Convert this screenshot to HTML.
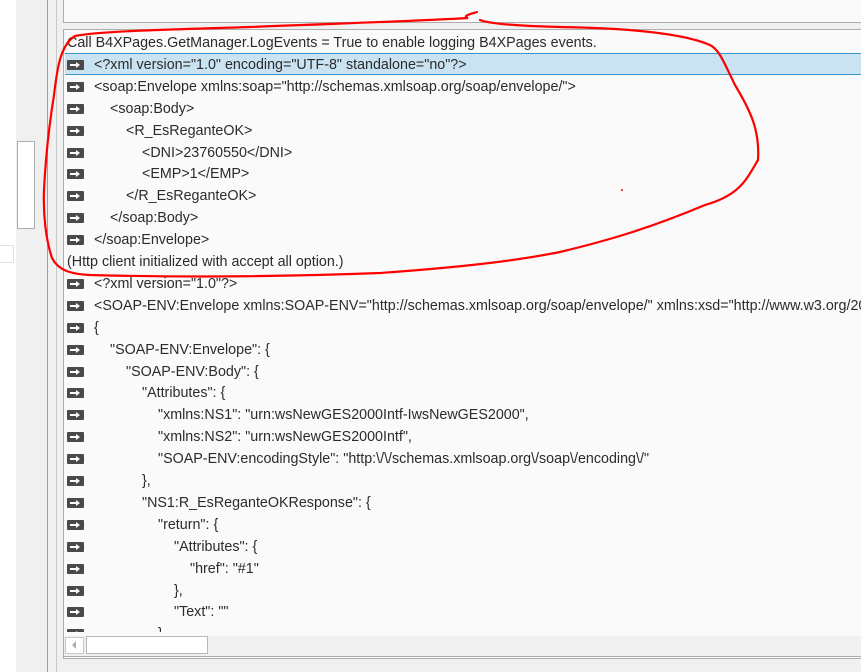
<!DOCTYPE html>
<html><head><meta charset="utf-8"><style>
*{margin:0;padding:0;box-sizing:border-box}
html,body{width:861px;height:672px;overflow:hidden}
body{background:#fff;position:relative;font-family:"Liberation Sans",sans-serif}
.abs{position:absolute}
#rows{position:absolute;left:0;top:0;width:861px;height:632px;overflow:hidden}
.row{position:absolute;left:65px;right:0;height:22px;font-size:14.3px;color:#2b2b2b;white-space:nowrap;line-height:22px;overflow:hidden}
.row .t{position:absolute;top:0}
.ic{position:absolute;left:2px;top:6px;width:17px;height:10px;background:#4a4a4a;border-radius:1px}
.ic:after{content:"";position:absolute;left:3px;top:4px;width:7px;height:2px;background:#fff}
.ic:before{content:"";position:absolute;left:9px;top:2px;border-left:4px solid #fff;border-top:3px solid transparent;border-bottom:3px solid transparent}
</style></head><body>
<div class="abs" style="left:16px;top:0;width:32px;height:672px;background:#f0f0f0"></div>
<div class="abs" style="left:17px;top:141px;width:18px;height:88px;background:#fff;border:1px solid #adadad"></div>
<div class="abs" style="left:0;top:245px;width:14px;height:18px;background:#fff;border:1px solid #e0e0e0;border-left:none"></div>
<div class="abs" style="left:47px;top:0;width:1px;height:672px;background:#a0a0a0"></div>
<div class="abs" style="left:48px;top:0;width:813px;height:672px;background:#f0f0f0"></div>
<div class="abs" style="left:56px;top:0;width:1px;height:672px;background:#c8c8c8"></div>
<div class="abs" style="left:63px;top:0;width:798px;height:23px;background:#fafafa;border-left:1px solid #adadad;border-bottom:1px solid #adadad"></div>
<div class="abs" style="left:63px;top:29px;width:798px;height:630px;background:#fafafa;border-left:1px solid #adadad;border-top:1px solid #adadad;border-bottom:1px solid #adadad;overflow:hidden"></div>
<div class="abs" style="left:65px;top:53px;width:796px;height:22px;background:#c9e3f2;border-top:1px solid #3c96d4;border-bottom:1px solid #3c96d4"></div>
<div id="rows"></div>
<script>
var L=[
[0,0,'Call B4XPages.GetManager.LogEvents = True to enable logging B4XPages events.'],
[1,0,'<?xml version="1.0" encoding="UTF-8" standalone="no"?>'],
[1,0,'<soap:Envelope xmlns:soap="http://schemas.xmlsoap.org/soap/envelope/">'],
[1,1,'<soap:Body>'],
[1,2,'<R_EsReganteOK>'],
[1,3,'<DNI>23760550</DNI>'],
[1,3,'<EMP>1</EMP>'],
[1,2,'</R_EsReganteOK>'],
[1,1,'</soap:Body>'],
[1,0,'</soap:Envelope>'],
[0,0,'(Http client initialized with accept all option.)'],
[1,0,'<?xml version="1.0"?>'],
[1,0,'<SOAP-ENV:Envelope xmlns:SOAP-ENV="http://schemas.xmlsoap.org/soap/envelope/" xmlns:xsd="http://www.w3.org/2001/XMLSchema"'],
[1,0,'{'],
[1,1,'"SOAP-ENV:Envelope": {'],
[1,2,'"SOAP-ENV:Body": {'],
[1,3,'"Attributes": {'],
[1,4,'"xmlns:NS1": "urn:wsNewGES2000Intf-IwsNewGES2000",'],
[1,4,'"xmlns:NS2": "urn:wsNewGES2000Intf",'],
[1,4,'"SOAP-ENV:encodingStyle": "http:\\/\\/schemas.xmlsoap.org\\/soap\\/encoding\\/"'],
[1,3,'},'],
[1,3,'"NS1:R_EsReganteOKResponse": {'],
[1,4,'"return": {'],
[1,5,'"Attributes": {'],
[1,6,'"href": "#1"'],
[1,5,'},'],
[1,5,'"Text": ""'],
[1,4,'}']];
var h='';
L.forEach(function(r,i){
 var top=32+i*21.9;
 var left=r[0]?29+r[1]*16:2;
 var txt=r[2].replace(/&/g,'&amp;').replace(/</g,'&lt;').replace(/>/g,'&gt;');
 h+='<div class="row" style="top:'+top+'px">'+(r[0]?'<div class="ic"></div>':'')+'<span class="t" style="left:'+left+'px">'+txt+'</span></div>';
});
document.getElementById('rows').innerHTML=h;
</script>
<div class="abs" style="left:64px;top:632px;width:797px;height:4px;background:#fafafa"></div>
<div class="abs" style="left:64px;top:636px;width:797px;height:20px;background:#f0f0f0"></div>
<div class="abs" style="left:65px;top:637px;width:19px;height:17px;background:#fff;border:1px solid #c8c8c8"></div>
<div class="abs" style="left:72px;top:641px;border-right:4px solid #b0b0b0;border-top:4px solid transparent;border-bottom:4px solid transparent"></div>
<div class="abs" style="left:86px;top:636px;width:122px;height:18px;background:#fff;border:1px solid #b8b8b8"></div>
<div class="abs" style="left:63px;top:656px;width:798px;height:1px;background:#adadad"></div>
<svg class="abs" style="left:0;top:0" width="861" height="672">
<path d="M477 12 C470 14 462 16 468 18 C420 21 350 23 250 27 C160 30 100 31 75 36 C60 45 57 70 54 95 C50 120 46 150 44 190 C43 215 46 240 52 258 C58 270 70 274 90 275 C200 278 300 276 380 273 C450 268 510 262 560 252 C610 240 650 228 705 205 C740 195 746 180 758 160 C760 130 750 110 735 85 C725 65 720 50 710 45 C680 32 620 28 560 27 C520 26 490 24 480 20" fill="none" stroke="#f00" stroke-width="2.2" stroke-linecap="round"/>
<circle cx="622" cy="190" r="1" fill="#f00"/>
</svg>
</body></html>
